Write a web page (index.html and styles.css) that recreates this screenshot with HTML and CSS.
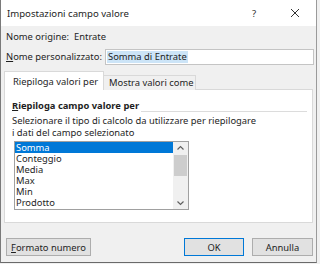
FILE: index.html
```html
<!DOCTYPE html>
<html lang="it">
<head>
    <meta charset="UTF-8">
    <title>Impostazioni campo valore</title>
    <link rel="stylesheet" href="styles.css">
</head>
<body>
    <div class="dialog">
        <div class="titlebar">
            <span class="title">Impostazioni campo valore</span>
            <span class="help">?</span>
            <svg class="close" width="10" height="10" viewBox="0 0 10 10">
                <path d="M1 1 L9 9 M9 1 L1 9" stroke="#333" stroke-width="1" fill="none"/>
            </svg>
        </div>

        <div class="content">
            <div class="row">
                <span class="label-short">Nome origine:</span>
                <span>Entrate</span>
            </div>
            <div class="row row-input">
                <span class="label"><u>N</u>ome personalizzato:</span>
                <div class="input"><span class="selected-text">Somma di Entrate</span></div>
            </div>

            <div class="tabs">
                <div class="tab active">Riepiloga valori per</div>
                <div class="tab">Mostra valori come</div>
            </div>

            <div class="panel">
                <div class="group-title">
                    <span class="bold"><u>R</u>iepiloga campo valore per</span>
                    <span class="sep"></span>
                </div>
                <p class="hint">Selezionare il tipo di calcolo da utilizzare per riepilogare<br>i dati del campo selezionato</p>

                <div class="listbox">
                    <ul class="items">
                        <li class="sel">Somma</li>
                        <li>Conteggio</li>
                        <li>Media</li>
                        <li>Max</li>
                        <li>Min</li>
                        <li>Prodotto</li>
                    </ul>
                    <div class="scrollbar">
                        <svg width="15" height="12" viewBox="0 0 15 12">
                            <path d="M4.5 7.5 L7.5 4.5 L10.5 7.5" stroke="#606060" stroke-width="1.2" fill="none"/>
                        </svg>
                        <div class="thumb-track"><div class="thumb"></div></div>
                        <svg width="15" height="12" viewBox="0 0 15 12">
                            <path d="M4.5 4.5 L7.5 7.5 L10.5 4.5" stroke="#606060" stroke-width="1.2" fill="none"/>
                        </svg>
                    </div>
                </div>
            </div>

            <div class="buttons">
                <button class="btn btn-wide"><u>F</u>ormato numero</button>
                <span class="spacer"></span>
                <button class="btn btn-default">OK</button>
                <button class="btn">Annulla</button>
            </div>
        </div>
    </div>
</body>
</html>
```

FILE: styles.css
```css
* {
    margin: 0;
    padding: 0;
    box-sizing: border-box;
}

body {
    background: #f0f0f0;
    font-family: 'Noto Sans', 'Open Sans', sans-serif;
    font-size: 9.4px;
    color: #1e1e1e;
}

.dialog {
    width: 317px;
    height: 263px;
    background: #f0f0f0;
    border-left: 1px solid #7a7a7a;
    border-right: 1px solid #9a9a9a;
    border-bottom: 1px solid #6a6a6a;
}

.titlebar {
    height: 26px;
    background: #fff;
    display: flex;
    align-items: center;
    padding-left: 6px;
    font-size: 9.6px;
}

.title {
    flex: 1;
}

.help {
    width: 8px;
    margin-right: 30px;
    color: #333;
}

.close {
    margin-right: 16px;
}

.content {
    padding: 0 3px;
}

.row {
    display: flex;
    align-items: center;
    padding-left: 2px;
    margin-top: 5px;
    line-height: 12px;
}

.label-short {
    width: 68px;
}

.row-input {
    margin-top: 6px;
    margin-right: -1px;
}

.label {
    width: 99px;
}

.input {
    width: 209px;
    height: 16px;
    background: #fff;
    border: 1px solid #c4c4c4;
    padding: 1px 1px;
    line-height: 12px;
}

.selected-text {
    display: inline-block;
    background: #cce4f7;
    padding: 0 1px;
}

.tabs {
    display: flex;
    align-items: flex-end;
    margin-top: 6px;
    margin-bottom: -1px;
    height: 19px;
}

.tab {
    height: 15px;
    width: 92px;
    border: 1px solid #d9d9d9;
    border-left: none;
    border-bottom: none;
    background: #f0f0f0;
    padding-left: 5px;
    line-height: 14px;
    white-space: nowrap;
}

.tab.active {
    height: 19px;
    width: 100px;
    border-left: 1px solid #d9d9d9;
    background: #fff;
    padding-left: 8px;
    line-height: 20px;
    position: relative;
    z-index: 1;
}

.panel {
    height: 134px;
    background: #fff;
    border: 1px solid #d9d9d9;
    padding: 8px 5px 0 7px;
}

.group-title {
    display: flex;
    align-items: flex-end;
    height: 14px;
    line-height: 12px;
}

.bold {
    font-weight: bold;
}

.sep {
    flex: 1;
    border-bottom: 1px solid #dcdcdc;
    margin-left: 2px;
}

.hint {
    margin-top: 3px;
    line-height: 12px;
}

.listbox {
    display: flex;
    width: 175px;
    height: 69px;
    margin: 2px 0 0 2px;
    border: 1px solid #a0a0a0;
    background: #fff;
}

.items {
    list-style: none;
    flex: 1;
}

.items li {
    height: 11px;
    line-height: 11px;
    padding-left: 1px;
}

.items li.sel {
    background: #0078d7;
    color: #fff;
}

.scrollbar {
    width: 15px;
    background: #f0f0f0;
    display: flex;
    flex-direction: column;
}

.thumb-track {
    flex: 1;
    padding: 1px 1px;
}

.thumb {
    height: 21px;
    background: #cdcdcd;
}

.buttons {
    display: flex;
    margin-top: 15px;
    padding-left: 2px;
}

.spacer {
    flex: 1;
}

.btn {
    height: 18px;
    width: 61px;
    background: #e1e1e1;
    border: 1px solid #adadad;
    font-family: inherit;
    font-size: 9.4px;
    color: #1e1e1e;
    margin-left: 8px;
}

.btn-wide {
    width: 85px;
    margin-left: 0;
}

.btn-default {
    width: 60px;
    border-color: #0078d7;
}
```
